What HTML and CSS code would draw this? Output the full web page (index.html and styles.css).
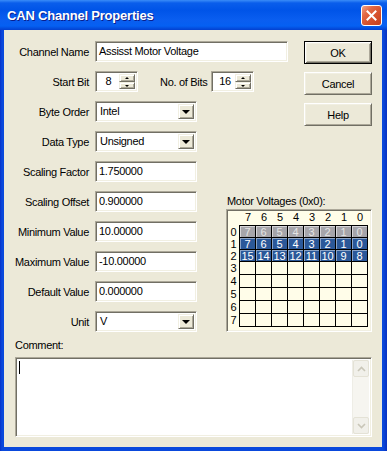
FILE: index.html
```html
<!DOCTYPE html>
<html lang="en">
<head>
    <meta charset="UTF-8">
    <title>CAN Channel Properties</title>
    <link rel="stylesheet" href="styles.css">
</head>
<body>

<div class="window">
    <div class="titlebar">
        <span class="title">CAN Channel Properties</span>
        <button type="button" class="close" aria-label="Close">
            <svg width="11" height="11" viewBox="0 0 11 11"><path d="M1.5 1.5 L9.5 9.5 M9.5 1.5 L1.5 9.5" stroke="#fff" stroke-width="2" stroke-linecap="square"/></svg>
        </button>
    </div>

    <div class="client">
        <div class="top-block">
            <div class="rows">
                <div class="row">
                    <label class="lbl">Channel Name</label>
                    <div class="edit wide">Assisst Motor Voltage</div>
                </div>
                <div class="row">
                    <label class="lbl">Start Bit</label>
                    <div class="spin">
                        <span class="spin-val">8</span>
                        <span class="spin-btns"><span class="spin-up"></span><span class="spin-down"></span></span>
                    </div>
                    <label class="lbl-inline">No. of Bits</label>
                    <div class="spin">
                        <span class="spin-val">16</span>
                        <span class="spin-btns"><span class="spin-up"></span><span class="spin-down"></span></span>
                    </div>
                </div>
                <div class="row">
                    <label class="lbl">Byte Order</label>
                    <div class="combo"><span class="combo-val">Intel</span><span class="combo-btn"></span></div>
                </div>
            </div>
            <div class="buttons">
                <button type="button" class="btn default">OK</button>
                <button type="button" class="btn">Cancel</button>
                <button type="button" class="btn">Help</button>
            </div>
        </div>

        <div class="bottom-block">
            <div class="rows">
                <div class="row">
                    <label class="lbl">Data Type</label>
                    <div class="combo"><span class="combo-val">Unsigned</span><span class="combo-btn"></span></div>
                </div>
                <div class="row">
                    <label class="lbl">Scaling Factor</label>
                    <div class="edit">1.750000</div>
                </div>
                <div class="row">
                    <label class="lbl">Scaling Offset</label>
                    <div class="edit">0.900000</div>
                </div>
                <div class="row">
                    <label class="lbl">Minimum Value</label>
                    <div class="edit">10.00000</div>
                </div>
                <div class="row">
                    <label class="lbl">Maximum Value</label>
                    <div class="edit">-10.00000</div>
                </div>
                <div class="row">
                    <label class="lbl">Default Value</label>
                    <div class="edit">0.000000</div>
                </div>
                <div class="row">
                    <label class="lbl">Unit</label>
                    <div class="combo"><span class="combo-val">V</span><span class="combo-btn"></span></div>
                </div>
            </div>

            <div class="panel">
                <div class="panel-title">Motor Voltages (0x0):</div>
                <div class="bitbox">
                    <div class="bit-head" id="bitHead"></div>
                    <div class="bit-body">
                        <div class="bit-labels" id="bitLabels"></div>
                        <div class="bit-grid" id="bitGrid"></div>
                    </div>
                </div>
            </div>
        </div>

        <div class="comment-label">Comment:</div>
        <div class="memo">
            <div class="memo-text"><span class="caret"></span></div>
            <div class="vscroll">
                <span class="sb-btn"><svg width="9" height="6" viewBox="0 0 9 6"><path d="M1 5 L4.5 1.5 L8 5" fill="none" stroke="#C9C6B8" stroke-width="1.6"/></svg></span>
                <span class="sb-track"></span>
                <span class="sb-btn"><svg width="9" height="6" viewBox="0 0 9 6"><path d="M1 1 L4.5 4.5 L8 1" fill="none" stroke="#C9C6B8" stroke-width="1.6"/></svg></span>
            </div>
        </div>
    </div>
</div>

<script>
    // grade de bits: linha 0 = byte usado, linhas 1-2 = bits do sinal
    function buildBitGrid() {
        const head = document.getElementById('bitHead');
        const labels = document.getElementById('bitLabels');
        const grid = document.getElementById('bitGrid');
        let headHtml = '';
        let labelHtml = '';
        let gridHtml = '';

        for (let c = 7; c >= 0; c--) {
            headHtml += `<span>${c}</span>`;
        }
        for (let r = 0; r < 8; r++) {
            labelHtml += `<span>${r}</span>`;
            for (let c = 7; c >= 0; c--) {
                if (r === 0) {
                    gridHtml += `<span class="cell used">${c}</span>`;
                } else if (r < 3) {
                    gridHtml += `<span class="cell mapped">${(r - 1) * 8 + c}</span>`;
                } else {
                    gridHtml += `<span class="cell"></span>`;
                }
            }
        }
        head.innerHTML = headHtml;
        labels.innerHTML = labelHtml;
        grid.innerHTML = gridHtml;
    }

    buildBitGrid();
</script>

</body>
</html>
```

FILE: styles.css
```css
body {
    margin: 0;
    font-family: 'Liberation Sans', Arial, sans-serif;
    font-size: 11px;
    letter-spacing: -0.3px;
    color: #000;
    background: #fff;
}
.window {
    width: 387px;
    height: 451px;
    display: flex;
    flex-direction: column;
    background: linear-gradient(to right, #0832C8 0, #0A49DC 2px, #0A49DC 383px, #0831C0 100%);
}
.titlebar {
    height: 30px;
    flex-shrink: 0;
    display: flex;
    align-items: center;
    padding: 0 5px 0 7px;
    background: linear-gradient(to bottom, #3A8CF8 0, #0A5EEB 3px, #0054E8 10px, #0A5EF0 20px, #0560F2 26px, #0348D8 29px, #0340D0 30px);
}
.title {
    color: #fff;
    font-weight: 700;
    font-size: 13px;
    letter-spacing: -0.2px;
    text-shadow: 1px 1px #0A1E8C;
}
.close {
    margin-left: auto;
    width: 21px;
    height: 21px;
    padding: 0;
    border: 1px solid #fff;
    border-radius: 3px;
    background: linear-gradient(135deg, #F0A48A 0, #E26844 30%, #D6512D 60%, #C6401E 100%);
    display: flex;
    align-items: center;
    justify-content: center;
}
.close svg {
    display: block;
}
.client {
    flex: 1;
    margin: 0 5px 4px 4px;
    padding: 11px 10px 0 11px;
    background: #ECE9D8;
    display: flex;
    flex-direction: column;
}
.top-block {
    display: flex;
    justify-content: space-between;
}
.bottom-block {
    display: flex;
    justify-content: space-between;
    align-items: flex-end;
    margin-top: 5px;
}
.rows {
    display: flex;
    flex-direction: column;
    gap: 9px;
}
.row {
    display: flex;
    align-items: center;
    height: 21px;
}
.lbl {
    width: 74px;
    margin-right: 6px;
    text-align: right;
    white-space: nowrap;
}
.lbl-inline {
    margin: 0 4px 0 22px;
    white-space: nowrap;
}

/* campos com borda afundada */
.edit, .combo, .spin, .memo, .bitbox {
    box-sizing: border-box;
    border: 1px solid;
    border-color: #ACA899 #FFFFFF #FFFFFF #ACA899;
    box-shadow: inset 1px 1px #716F64, inset -1px -1px #F1EFE2;
}
.edit, .combo, .spin {
    height: 21px;
    background: #fff;
}
.edit {
    width: 102px;
    padding: 0 3px;
    line-height: 19px;
    white-space: nowrap;
}
.edit.wide {
    width: 193px;
}
.combo {
    width: 102px;
    display: flex;
    padding: 2px;
}
.combo-val {
    flex: 1;
    padding-left: 2px;
    line-height: 15px;
}
.combo-btn, .spin-up, .spin-down {
    box-sizing: border-box;
    background: #ECE9D8;
    border: 1px solid;
    border-color: #F1EFE2 #716F64 #716F64 #F1EFE2;
    box-shadow: inset 1px 1px #fff, inset -1px -1px #ACA899;
    position: relative;
}
.combo-btn {
    width: 16px;
    height: 15px;
}
.combo-btn::after {
    content: "";
    position: absolute;
    left: 3px;
    top: 5px;
    border-left: 4px solid transparent;
    border-right: 4px solid transparent;
    border-top: 4px solid #000;
}
.spin {
    width: 43px;
    display: flex;
    padding: 2px;
}
.spin-val {
    flex: 1;
    text-align: center;
    line-height: 15px;
}
.spin-btns {
    width: 16px;
    display: flex;
    flex-direction: column;
}
.spin-up, .spin-down {
    flex: 1;
}
.spin-up::after, .spin-down::after {
    content: "";
    position: absolute;
    left: 5px;
    border-left: 2px solid transparent;
    border-right: 2px solid transparent;
}
.spin-up::after {
    top: 2px;
    border-bottom: 2px solid #000;
}
.spin-down::after {
    top: 2px;
    border-top: 2px solid #000;
}

.buttons {
    display: flex;
    flex-direction: column;
    gap: 8px;
}
.btn {
    width: 68px;
    height: 23px;
    padding: 0;
    font-family: inherit;
    font-size: 11px;
    letter-spacing: inherit;
    color: #000;
    background: #ECE9D8;
    border: 1px solid;
    border-color: #fff #716F64 #716F64 #fff;
    box-shadow: inset 1px 1px #F1EFE2, inset -1px -1px #ACA899;
}
.btn.default {
    border-color: #000;
    box-shadow: inset 1px 1px #fff, inset -1px -1px #716F64, inset 2px 2px #F1EFE2, inset -2px -2px #ACA899;
}

/* painel com a grade de bits */
.panel {
    width: 146px;
}
.panel-title {
    line-height: 13px;
    margin-bottom: 1px;
    padding-left: 1px;
    white-space: nowrap;
}
.bitbox {
    height: 123px;
    padding: 1px 0 0 1px;
    background: #FFFDE9;
    letter-spacing: 0;
}
.bit-head {
    display: grid;
    grid-template-columns: repeat(8, 16px);
    height: 14px;
    line-height: 13px;
    padding-left: 12px;
    text-align: center;
}
.bit-body {
    display: flex;
}
.bit-labels {
    width: 11px;
    padding-top: 1px;
    display: grid;
    grid-template-rows: repeat(3, 12px) repeat(5, 13px);
    text-align: center;
    line-height: 12px;
}
.bit-grid {
    display: grid;
    grid-template-columns: repeat(8, 16px);
    grid-template-rows: repeat(3, 12px) repeat(5, 13px);
    border-left: 1px solid #000;
    border-top: 1px solid #000;
}
.cell {
    box-sizing: border-box;
    border-right: 1px solid #000;
    border-bottom: 1px solid #000;
    display: flex;
    align-items: center;
    justify-content: center;
    font-size: 11px;
}
.cell.used {
    background: #A6A5AA;
    color: #E4E4E4;
    box-shadow: inset 1px 1px rgba(255, 255, 255, 0.55);
}
.cell.mapped {
    background: #2B5899;
    color: #fff;
    box-shadow: inset 1px 1px rgba(255, 255, 255, 0.45);
}

/* comentario */
.comment-label {
    margin-top: 7px;
    line-height: 13px;
}
.memo {
    margin-top: 5px;
    height: 80px;
    background: #fff;
    display: flex;
    padding: 2px;
}
.memo-text {
    flex: 1;
    padding: 1px 0 0 1px;
}
.caret {
    display: block;
    width: 1px;
    height: 13px;
    background: #000;
}
.vscroll {
    width: 16px;
    display: flex;
    flex-direction: column;
    background: #F6F5F0;
    border-left: 1px solid #EEEDE6;
}
.sb-btn {
    box-sizing: border-box;
    height: 17px;
    display: flex;
    align-items: center;
    justify-content: center;
    background: #F1F0EA;
    border: 1px solid #E4E2D6;
    border-radius: 2px;
}
.sb-track {
    flex: 1;
}
```
